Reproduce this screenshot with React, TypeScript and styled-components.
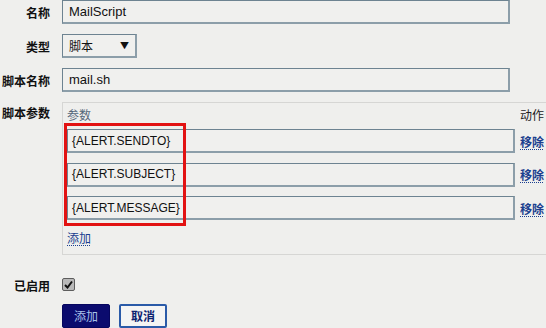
import React from "react";
import styled, { createGlobalStyle } from "styled-components";

const Global = createGlobalStyle`
  html, body {
    margin: 0;
    padding: 0;
    background: #efefed;
    overflow: hidden;
  }
  body {
    font-family: "Liberation Sans", "Noto Sans CJK SC", sans-serif;
    font-size: 13px;
    color: #111;
  }
`;

const Form = styled.div`
  display: grid;
  grid-template-columns: 50px 1fr;
  column-gap: 12px;
  row-gap: 10px;
  width: 1000px;
`;

const Label = styled.div<{ $top?: boolean }>`
  font-family: "Noto Sans CJK SC", sans-serif;
  font-weight: 700;
  font-size: 12px;
  text-align: right;
  white-space: nowrap;
  display: flex;
  justify-content: flex-end;
  align-items: ${(p) => (p.$top ? "flex-start" : "center")};
  padding-top: ${(p) => (p.$top ? "2px" : "0")};
`;

const Field = styled.div<{ $w?: number; $small?: boolean }>`
  box-sizing: border-box;
  width: ${(p) => p.$w ?? 448}px;
  height: 24px;
  border: 1px solid #6d8391;
  border-right: 2px solid #8c9ea9;
  border-bottom: 2px solid #8c9ea9;
  background: #f0f0ee;
  padding: 0 ${(p) => (p.$small ? 4 : 6)}px;
  display: flex;
  align-items: center;
  font-size: ${(p) => (p.$small ? 12 : 13)}px;
  color: #111;
`;

const Select = styled(Field)`
  justify-content: space-between;
  font-family: "Noto Sans CJK SC", sans-serif;
  font-size: 12px;
  padding-right: 6px;
`;

const Arrow = styled.span`
  font-size: 9px;
  color: #111;
`;

const Params = styled.div`
  position: relative;
  box-sizing: border-box;
  width: 520px;
  border: 1px solid #d6d6d4;
  border-right: none;
  padding: 2px 0 8px 4px;
`;

const ParamHead = styled.div`
  display: grid;
  grid-template-columns: 448px auto;
  column-gap: 5px;
  font-family: "Noto Sans CJK SC", sans-serif;
  font-size: 12px;
  height: 18px;
  align-items: center;
`;

const HeadCell = styled.span<{ $muted?: boolean }>`
  color: ${(p) => (p.$muted ? "#55677a" : "#222")};
`;

const ParamRow = styled.div`
  display: grid;
  grid-template-columns: 448px auto;
  column-gap: 5px;
  align-items: center;
  margin-top: 6px;
  height: 24px;
  & + & {
    margin-top: 9.5px;
  }
`;

const Link = styled.a`
  font-family: "Noto Sans CJK SC", sans-serif;
  font-weight: 700;
  font-size: 12px;
  color: #1b3f8f;
  text-decoration: underline dotted;
  text-underline-offset: 2px;
  cursor: pointer;
`;

const AddLink = styled(Link)`
  display: inline-block;
  margin-top: 9px;
  font-weight: 400;
`;

const Highlight = styled.div`
  position: absolute;
  left: 1px;
  top: 20px;
  width: 122px;
  height: 103px;
  box-sizing: border-box;
  border: 3px solid #e21212;
  pointer-events: none;
`;

const Spacer = styled.div`
  grid-column: 1 / 3;
  height: 2px;
`;

const CheckCell = styled.div`
  height: 15px;
  display: flex;
  align-items: center;
`;

const Check = styled.span`
  box-sizing: border-box;
  width: 13px;
  height: 13px;
  border: 1px solid #5d5d5d;
  border-radius: 2px;
  background: #b9b9b9;
  display: inline-flex;
  align-items: center;
  justify-content: center;
`;

const Buttons = styled.div`
  display: flex;
  gap: 9px;
`;

const Button = styled.button<{ $primary?: boolean }>`
  box-sizing: border-box;
  width: 48px;
  height: 24px;
  border-radius: 2px;
  font-family: "Noto Sans CJK SC", sans-serif;
  font-size: 12px;
  font-weight: ${(p) => (p.$primary ? 400 : 700)};
  border: ${(p) => (p.$primary ? "1px solid #06065e" : "2px solid #2a5aa8")};
  background: ${(p) => (p.$primary ? "#0b0b6e" : "#f4f4f4")};
  color: ${(p) => (p.$primary ? "#a9c3ea" : "#0d2270")};
  padding: 0;
  line-height: 20px;
`;

const params = ["{ALERT.SENDTO}", "{ALERT.SUBJECT}", "{ALERT.MESSAGE}"];

export default function App() {
  return (
    <>
      <Global />
      <Form>
        <Label>名称</Label>
        <Field>MailScript</Field>

        <Label>类型</Label>
        <Select $w={75}>
          <span>脚本</span>
          <Arrow>▼</Arrow>
        </Select>

        <Label>脚本名称</Label>
        <Field>mail.sh</Field>

        <Label $top>脚本参数</Label>
        <Params>
          <ParamHead>
            <HeadCell $muted>参数</HeadCell>
            <HeadCell>动作</HeadCell>
          </ParamHead>
          {params.map((p) => (
            <ParamRow key={p}>
              <Field $small>{p}</Field>
              <Link>移除</Link>
            </ParamRow>
          ))}
          <AddLink>添加</AddLink>
          <Highlight />
        </Params>

        <Spacer />

        <Label>已启用</Label>
        <CheckCell>
          <Check>
            <svg width="9" height="9" viewBox="0 0 9 9">
              <path d="M1 5 L3.5 7.5 L8 1.5" stroke="#111" strokeWidth="2" fill="none" />
            </svg>
          </Check>
        </CheckCell>

        <div />
        <Buttons>
          <Button $primary>添加</Button>
          <Button>取消</Button>
        </Buttons>
      </Form>
    </>
  );
}
